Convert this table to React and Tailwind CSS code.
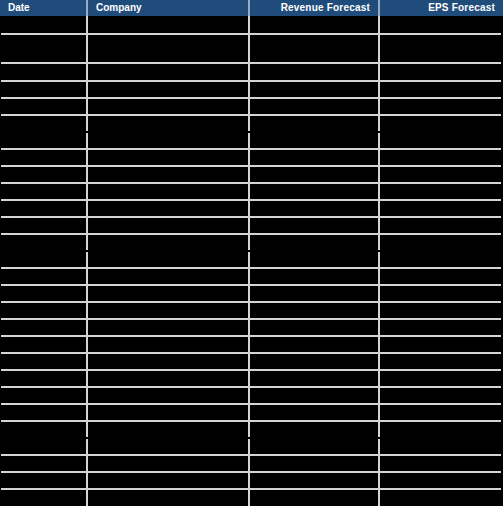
import React from "react";

const FONT = { fontFamily: '"Liberation Sans", Arial, sans-serif' };

function Row({ h }) {
  const hc =
    h === 17 ? "h-[17px]" : h === 27 ? "h-[27px]" : h === 16 ? "h-[16px]" : "h-[15px]";
  return (
    <div className={`flex ${hc}`}>
      <div className="w-[88px] shrink-0 border-r-2 border-[#d4d4d4]" />
      <div className="w-[162px] shrink-0 border-r-2 border-[#d4d4d4]" />
      <div className="w-[130px] shrink-0 border-r-2 border-[#d4d4d4]" />
      <div className="flex-1" />
    </div>
  );
}

function Line() {
  return <div className="h-[2px] ml-[1px] w-[500px] bg-[#d4d4d4]" />;
}

function Gap() {
  return <div className="h-[2px] w-full bg-black" />;
}

export default function App() {
  const items = [];
  items.push({ t: "row", h: 17 });
  items.push({ t: "line" });
  items.push({ t: "row", h: 27 });
  items.push({ t: "line" });
  items.push({ t: "row", h: 16 });
  items.push({ t: "line" });
  const gaps = new Set([131, 250, 437]);
  for (let y = 97; y <= 488; y += 17) {
    items.push({ t: "row", h: 15 });
    items.push({ t: gaps.has(y) ? "gap" : "line" });
  }
  items.push({ t: "row", h: 16 });

  return (
    <div className="w-[503px] h-[506px] bg-black overflow-hidden" style={FONT}>
      <div className="flex h-[16px] bg-[#1f4c7b] text-white text-[10px] font-bold leading-[16px]">
        <div className="w-[88px] shrink-0 border-r-2 border-[#9aacc2] px-2">Date</div>
        <div className="w-[162px] shrink-0 border-r-2 border-[#9aacc2] px-2">Company</div>
        <div className="w-[130px] shrink-0 border-r-2 border-[#9aacc2] px-2 text-right tracking-[0.2px]">
          Revenue Forecast
        </div>
        <div className="flex-1 px-2 text-right tracking-[0.2px]">EPS Forecast</div>
      </div>
      {items.map((it, i) =>
        it.t === "row" ? (
          <Row key={i} h={it.h} />
        ) : it.t === "line" ? (
          <Line key={i} />
        ) : (
          <Gap key={i} />
        )
      )}
    </div>
  );
}
